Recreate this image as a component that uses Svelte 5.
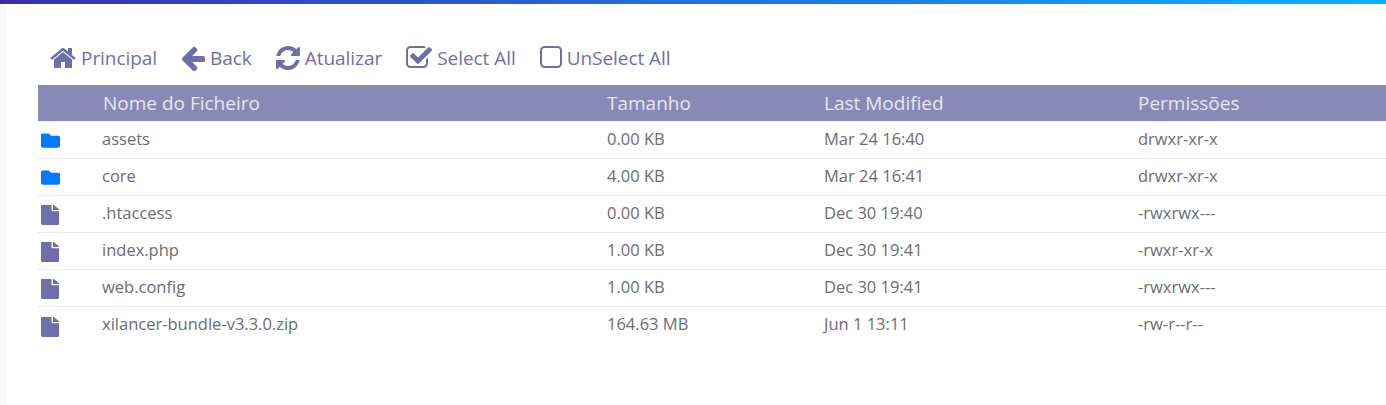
<script>
const icons = {
  home: "M1472 992v480q0 26-19 45t-45 19h-384v-384h-256v384h-384q-26 0-45-19t-19-45v-480q0-1 .5-3t.5-3l575-474 575 474q1 2 1 6zm223-69l-62 74q-8 9-21 11h-3q-13 0-21-7l-692-577-692 577q-12 8-24 7-13-2-21-11l-62-74q-8-10-7-23.5t11-21.5l719-599q32-26 76-26t76 26l244 204v-195q0-14 9-23t23-9h192q14 0 23 9t9 23v408l219 182q10 8 11 21.5t-7 23.5z",
  back: "M1664 896v128q0 53-32.5 90.5t-84.5 37.5h-704l293 294q38 36 38 90t-38 90l-75 76q-37 37-90 37-52 0-91-37l-651-652q-37-37-37-90 0-52 37-91l651-650q38-38 91-38 52 0 90 38l75 74q38 38 38 91t-38 91l-293 293h704q52 0 84.5 37.5t32.5 90.5z",
  refresh: "M1639 1056q0 5-1 7-64 268-268 434.5t-478 166.5q-146 0-282.5-55t-243.5-157l-129 129q-19 19-45 19t-45-19-19-45v-448q0-26 19-45t45-19h448q26 0 45 19t19 45-19 45l-137 137q71 66 161 102t187 36q134 0 250-65t186-179q11-17 53-117 8-23 30-23h192q13 0 22.5 9.5t9.5 22.5zm25-800v448q0 26-19 45t-45 19h-448q-26 0-45-19t-19-45 19-45l138-138q-148-137-349-137-134 0-250 65t-186 179q-11 17-53 117-8 23-30 23h-199q-13 0-22.5-9.5t-9.5-22.5v-7q65-268 270-434.5t480-166.5q146 0 284 55.5t245 156.5l130-129q19-19 45-19t45 19 19 45z",
  check: "M1472 930v318q0 119-84.5 203.5t-203.5 84.5h-832q-119 0-203.5-84.5t-84.5-203.5v-832q0-119 84.5-203.5t203.5-84.5h832q63 0 117 25 15 7 18 23 3 17-9 29l-49 49q-10 10-23 10-3 0-9-2-23-6-45-6h-832q-66 0-113 47t-47 113v832q0 66 47 113t113 47h832q66 0 113-47t47-113v-254q0-13 9-22l64-64q10-10 23-10 6 0 12 3 20 8 20 29zm231-489l-814 814q-24 24-57 24t-57-24l-430-430q-24-24-24-57t24-57l110-110q24-24 57-24t57 24l263 263 647-647q24-24 57-24t57 24l110 110q24 24 24 57t-24 57z",
  square: "M1312 256h-832q-66 0-113 47t-47 113v832q0 66 47 113t113 47h832q66 0 113-47t47-113v-832q0-66-47-113t-113-47zm288 160v832q0 119-84.5 203.5t-203.5 84.5h-832q-119 0-203.5-84.5t-84.5-203.5v-832q0-119 84.5-203.5t203.5-84.5h832q119 0 203.5 84.5t84.5 203.5z",
};

// w = glyph advance in the 1792 grid, the icons are not all the same width
const actions = [
  { label: "Principal", icon: "home", w: 1664 },
  { label: "Back", icon: "back", w: 1536 },
  { label: "Atualizar", icon: "refresh", w: 1536 },
  { label: "Select All", icon: "check", w: 1664 },
  { label: "UnSelect All", icon: "square", w: 1408 },
];

const files = [
  { name: "assets", size: "0.00 KB", date: "Mar 24 16:40", perms: "drwxr-xr-x", dir: true },
  { name: "core", size: "4.00 KB", date: "Mar 24 16:41", perms: "drwxr-xr-x", dir: true },
  { name: ".htaccess", size: "0.00 KB", date: "Dec 30 19:40", perms: "-rwxrwx---" },
  { name: "index.php", size: "1.00 KB", date: "Dec 30 19:41", perms: "-rwxr-xr-x" },
  { name: "web.config", size: "1.00 KB", date: "Dec 30 19:41", perms: "-rwxrwx---" },
  { name: "xilancer-bundle-v3.3.0.zip", size: "164.63 MB", date: "Jun 1 13:11", perms: "-rw-r--r--" },
];
</script>

<div class="topbar"></div>
<div class="layout">
  <div class="sidebar"></div>
  <main class="content">
    <nav class="toolbar">
      {#each actions as a}
        <a href="#top" class="action">
          <svg class="action-icon" style="width: {a.w / 64}px" viewBox="{(1792 - a.w) / 2} 0 {a.w} 1792" aria-hidden="true"><path d={icons[a.icon]} /></svg>
          {a.label}
        </a>
      {/each}
    </nav>
    <table>
      <thead>
        <tr>
          <th class="c-icon"></th>
          <th class="c-name">Nome do Ficheiro</th>
          <th class="c-size">Tamanho</th>
          <th class="c-date">Last Modified</th>
          <th>Permissões</th>
        </tr>
      </thead>
      <tbody>
        {#each files as f}
          <tr>
            <td class="icon-cell">
              {#if f.dir}
                <svg class="folder" viewBox="0 0 512 512" aria-hidden="true"><path d="M464 128H272l-64-64H48C21.49 64 0 85.49 0 112v288c0 26.51 21.49 48 48 48h416c26.51 0 48-21.49 48-48V176c0-26.51-21.49-48-48-48z" /></svg>
              {:else}
                <svg class="file" viewBox="0 0 384 512" preserveAspectRatio="none" aria-hidden="true"><path d="M224 136V0H24C10.7 0 0 10.7 0 24v464c0 13.3 10.7 24 24 24h336c13.3 0 24-10.7 24-24V160H248c-13.2 0-24-10.8-24-24zm160-14.1v6.1H256V0h6.1c6.4 0 12.5 2.5 17 7l97.9 98c4.5 4.5 7 10.6 7 17z" /></svg>
              {/if}
            </td>
            <td>{f.name}</td>
            <td>{f.size}</td>
            <td>{f.date}</td>
            <td>{f.perms}</td>
          </tr>
        {/each}
      </tbody>
    </table>
  </main>
</div>

<style>
:global(body) {
  margin: 0;
  background: #fff;
  font-family: "Open Sans", "Noto Sans", sans-serif;
  overflow: hidden;
}
.topbar {
  height: 4px;
  background: linear-gradient(90deg, #3b2fa8 0%, #0fb0ff 100%);
}
.layout {
  display: flex;
  height: 401px;
}
.sidebar {
  width: 7px;
  background: #f8f9fa;
}
.content {
  flex: 1;
  padding-left: 31px;
}
.toolbar {
  display: flex;
  height: 81px;
  box-sizing: border-box;
  padding: 39px 0 0 12px;
  gap: 24px;
}
.action {
  display: flex;
  align-items: center;
  gap: 5px;
  height: 30px;
  color: #6f6ea8;
  font-size: 19px;
  letter-spacing: -0.05px;
  text-decoration: none;
  white-space: nowrap;
}
.action-icon {
  height: 28px;
  fill: #6f6ea8;
}
table {
  width: 100%;
  border-collapse: separate;
  border-spacing: 0;
  table-layout: fixed;
}
th {
  box-sizing: border-box;
  height: 37px;
  padding: 0 0 1px;
  border-bottom: 1px solid #e9ecef;
  background: #8a89b6;
  background-clip: padding-box;
  color: #e6e6f2;
  font-size: 19px;
  font-weight: 400;
  text-align: left;
}
.c-icon { width: 64px; }
.c-name { width: 505px; padding-left: 1px; }
.c-size { width: 217px; }
.c-date { width: 314px; }
td {
  box-sizing: border-box;
  height: 37px;
  padding: 0 0 4px;
  border-bottom: 1px solid #e9ecef;
  color: #6c6c74;
  font-size: 16.5px;
}
tr:last-child td {
  border-bottom: none;
}
.icon-cell {
  padding: 0 0 0 3px;
  line-height: 0;
}
.folder {
  width: 19px;
  height: 19px;
  fill: #007bff;
}
.file {
  width: 18px;
  height: 20px;
  margin-top: 2px;
  fill: #6f6ea8;
}
</style>
